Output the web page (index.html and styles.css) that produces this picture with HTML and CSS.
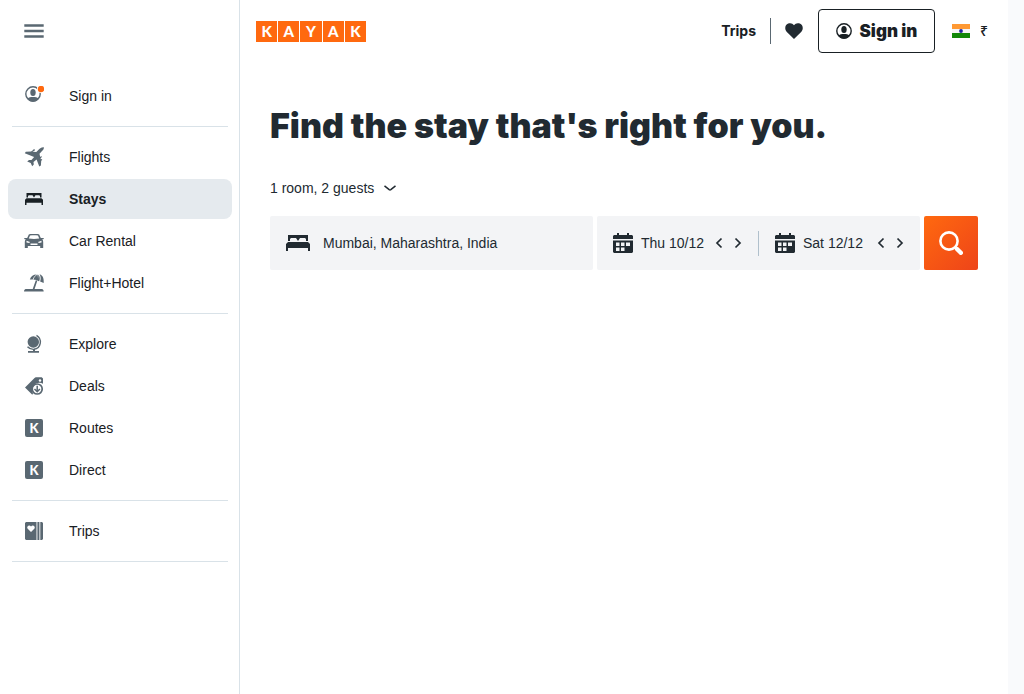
FILE: index.html
```html
<!DOCTYPE html>
<html lang="en">
<head>
<meta charset="utf-8">
<meta name="viewport" content="width=device-width, initial-scale=1">
<title>KAYAK Stays</title>
<link rel="stylesheet" href="styles.css">
</head>
<body>
<svg class="sprite" aria-hidden="true">
  <symbol id="bed" viewBox="0 0 24 16">
    <path d="M2 0h20v6h-2V4l-1-1h-5l-2 3-2-3H5L4 4v2H2z"/>
    <path d="M2 7h20l2 2v7h-2v-3H2v3H0V9z"/>
  </symbol>
  <symbol id="user" viewBox="0 0 16 16">
    <circle cx="8" cy="8" r="7.2" fill="none" stroke="currentColor" stroke-width="1.4"/>
    <ellipse cx="8" cy="6.5" rx="2.7" ry="3.5"/>
    <path d="M2.4 12.4c1.6-1.2 3.2-1.5 5.6-1.5s4 .3 5.6 1.5C12.400 14.500 10.500 15.600 8 15.600S3.600 14.500 2.400 12.400z"/>
  </symbol>
  <symbol id="calendar" viewBox="0 0 20 20">
    <path d="M1 2h3V0h2v2h8V0h2v2h3l1 1v3H0V3l1-1z"/>
    <path fill-rule="evenodd" d="M0 7.500h20V19l-1 1H1l-1-1zM3 9.500V13h3.500V9.500zM8 9.500V13h3.500V9.500zM13 9.500V13h4V9.500zM3 14.500V18h3.500v-3.500zM8 14.500V18h3.500v-3.500z"/>
  </symbol>
  <symbol id="left" viewBox="0 0 8 12"><path d="M6.500 1.500L2 6l4.500 4.500" fill="none" stroke="currentColor" stroke-width="1.700"/></symbol>
  <symbol id="right" viewBox="0 0 8 12"><path d="M1.500 1.500L6 6l-4.500 4.500" fill="none" stroke="currentColor" stroke-width="1.700"/></symbol>
</svg>
<div class="page">
  <aside class="sidebar">
    <button class="menu" aria-label="Menu"><svg class="icon" viewBox="0 0 20 20"><path d="M.3 3.300h19.400v2.400H.3zM.3 8.800h19.400v2.400H.3zM.3 14.300h19.400v2.400H.3z"/></svg></button>
    <nav class="nav" aria-label="Main">
      <a class="item" href="#"><svg class="icon" viewBox="0 0 20 20"><use href="#user" x="1" y="0" width="16" height="16"/><circle cx="17" cy="3" r="4" fill="#fff"/><circle cx="17" cy="3" r="3.200" fill="#ff690f"/></svg>Sign in</a>
      <hr class="rule">
      <a class="item" href="#"><svg class="icon" viewBox="0 0 20 20"><path d="M19.800.2c.3 1-.3 2.300-1.300 3.400l-3 3.100.7 3.200 1-.8.7.8-1.300 1.400.3 1.200.7-.6.7.7-1.100 1.400-.3 4.600-1.600 1-2.700-7.200-3.100 2.600.3 2.500-1.600 1.700-1.500-3.300-3.500-1.400 1.800-1.600 2.500.2 2.600-3.100L.8 6.300l1-1.600 5.300-.1 1.300-1.100.7.7-.5.6 3.700.3 2-2.100c1.300-1.300 2.800-3 5.500-2.800z"/><path d="M8.300 3.600l1.800-1.500.9.900-1.200 1.500z"/></svg>Flights</a>
      <a class="item active" href="#" aria-current="page"><svg class="icon" viewBox="0 0 20 20"><use href="#bed" x="1" y="4" width="18" height="12"/></svg>Stays</a>
      <a class="item" href="#"><svg class="icon" viewBox="0 0 20 20"><path fill-rule="evenodd" d="M0 7h3.200l1.600-3.600C5.200 3.100 7 3 10 3s4.800.1 5.200.4L16.800 7H20l-.7 1.300h-1.100c.7.800 1 1.600 1 2.700v6h-3v-2H3.800v2h-3v-6c0-1.100.3-1.900 1-2.700H.7zM6 4.500L4.800 7.600c3.400.5 7 .5 10.400 0L14 4.500c-2.600-.4-5.400-.4-8 0zM2.500 9.800v1.600l2.700.6.8-1zM17.500 9.800v1.600l-2.700.6-.8-1zM6.500 12.500v1.600h7v-1.600z"/></svg>Car Rental</a>
      <a class="item" href="#"><svg class="icon" viewBox="0 0 20 20"><path d="M0 18.400c0-1.800 1.300-2.400 2.500-2.400h6.200l3.100-8.700 1.500.5L10.600 16H17c1.500 0 2.700.6 2.700 2.400z"/><path d="M5.800 6.500C7 3.200 9.300 1.600 12.700 1.500 10.300 3 9.200 4.800 8.700 6.400zM9.400 6.700c.7-2.300 2-4 4.200-5.200l.8 6.700c-1.300-1.200-3.100-1.700-5-1.500zM14.300 1.400c1.700 2 1.900 4.500.9 6.900L14 7.900zM15.600 1.200c3.300 1.300 4.400 3.900 4.100 8.700l-3.600-1.500c.9-2.300.8-4.700-.5-7.200z"/></svg>Flight+Hotel</a>
      <hr class="rule">
      <a class="item" href="#"><svg class="icon" viewBox="0 0 20 20"><circle cx="9.300" cy="8" r="5.700"/><path d="M12.500 1.300c6.200 3.700 4.600 13-2.500 14-2.600.2-4.700-.7-6.500-2.600" fill="none" stroke="currentColor" stroke-width="1.400"/><path d="M9 15h2v2h4v1.700H4V17h5z"/></svg>Explore</a>
      <a class="item" href="#"><svg class="icon" viewBox="0 0 20 20"><path d="M1 11.500L10.500 2l1.200-.7h6L19 2.500v5.300C13.500 4.300 6.200 9.600 9 17.500l-.7 1.200z"/><circle cx="16" cy="4.500" r="1.200" fill="#fff"/><circle cx="13.200" cy="13" r="5" fill="none" stroke="currentColor" stroke-width="1.700"/><path d="M13.200 9.700v6M10.500 13l2.700 2.700 2.700-2.700" fill="none" stroke="currentColor" stroke-width="1.500"/></svg>Deals</a>
      <a class="item" href="#"><span class="badge" aria-hidden="true">K</span>Routes</a>
      <a class="item" href="#"><span class="badge" aria-hidden="true">K</span>Direct</a>
      <hr class="rule">
      <a class="item" href="#"><svg class="icon" viewBox="0 0 20 20"><path d="M2 1h10.500v18H2l-1-1V2zM13.400 1h2v18h-2zM16.300 1H18l1 1v16l-1 1h-1.700z"/><path d="M7 11L3.500 7.500C2.300 5.500 5.200 3.300 7 5.400c1.800-2.100 4.700.1 3.500 2.100z" fill="#fff"/></svg>Trips</a>
      <hr class="rule">
    </nav>
  </aside>
  <div class="content">
    <header class="header">
      <a class="logo" href="#" aria-label="KAYAK"><span>K</span><span>A</span><span>Y</span><span>A</span><span>K</span></a>
      <div class="tools">
        <a class="trips" href="#">Trips</a>
        <button class="heart" aria-label="Favourites"><svg viewBox="0 0 18 16"><path d="M9 16L1.600 8.700C-.7 6 0 1.800 3.200.6 5.600-.3 7.700.5 9 2.200 10.300.5 12.400-.3 14.800.6 18 1.800 18.700 6 16.400 8.700z"/></svg></button>
        <button class="signin"><svg viewBox="0 0 16 16"><use href="#user"/></svg>Sign in</button>
        <button class="locale" aria-label="India, rupee"><svg viewBox="0 0 18 14"><path fill="#f93" d="M0 0h18v5H0z"/><path fill="#f6f6f6" d="M0 5h18v4H0z"/><path fill="#138808" d="M0 9h18v5H0z"/><circle cx="9" cy="7" r="1.900" fill="#22229b"/></svg><span>₹</span></button>
      </div>
    </header>
    <main class="main">
      <h1 class="title">Find the stay that's right for you.</h1>
      <button class="guests">1 room, 2 guests<svg viewBox="0 0 12 6"><path d="M.5.800L5.200 4.600q.8.600 1.600 0L11.500.800" fill="none" stroke="currentColor" stroke-width="1.500"/></svg></button>
      <form class="search">
        <label class="field place"><svg viewBox="0 0 24 16"><use href="#bed"/></svg><input type="text" value="Mumbai, Maharashtra, India" aria-label="Destination"></label>
        <div class="field dates">
          <div class="date"><svg class="cal"><use href="#calendar"/></svg><button type="button" class="day">Thu 10/12</button><button type="button" class="step" aria-label="Earlier check-in"><svg><use href="#left"/></svg></button><button type="button" class="step" aria-label="Later check-in"><svg><use href="#right"/></svg></button></div>
          <div class="split"></div>
          <div class="date"><svg class="cal"><use href="#calendar"/></svg><button type="button" class="day">Sat 12/12</button><button type="button" class="step" aria-label="Earlier check-out"><svg><use href="#left"/></svg></button><button type="button" class="step" aria-label="Later check-out"><svg><use href="#right"/></svg></button></div>
        </div>
        <button class="go" aria-label="Search"><svg viewBox="0 0 24 24"><circle cx="10" cy="10" r="8.600" fill="none" stroke="currentColor" stroke-width="2.600"/><path d="M16 16l1.500 1.500" stroke="currentColor" stroke-width="3"/><path d="M18 18l3.800 3.800" stroke="currentColor" stroke-width="4.400" stroke-linecap="round"/></svg></button>
      </form>
    </main>
  </div>
</div>
</body>
</html>
```
FILE: styles.css
```css
* { box-sizing: border-box; }
body {
  margin: 0;
  background: #fff;
  color: #192024;
  font: 14px/20px "Liberation Sans", Arial, sans-serif;
}
svg { display: block; flex: none; fill: currentColor; }
button {
  margin: 0;
  padding: 0;
  border: 0;
  background: none;
  color: inherit;
  font: inherit;
  cursor: pointer;
}
a { color: inherit; text-decoration: none; }
.sprite { display: none; }

.page { display: flex; min-height: 100vh; border-right: 16px solid #f9fafc; }

.sidebar { flex: none; width: 240px; border-right: 1px solid #d9e2e8; }
.menu {
  display: flex;
  align-items: center;
  height: 62px;
  padding-left: 24px;
}
.icon { width: 20px; height: 20px; color: #5a6872; }
.nav { padding: 14px 7px 0 8px; }
.item {
  display: flex;
  align-items: center;
  gap: 25px;
  height: 40px;
  padding: 0 16px;
  border-radius: 8px;
}
.item + .item { margin-top: 2px; }
.active { background: #e5eaee; font-weight: 700; }
.active .icon { color: #192024; }
.rule { height: 1px; margin: 10px 4px; border: 0; background: #d9e2e8; }
.badge {
  width: 18px;
  height: 18px;
  margin: 0 1px;
  border-radius: 2px;
  background: #5a6872;
  color: #fff;
  font: 900 13px/18px Lato, sans-serif;
  text-align: center;
}

.content { flex: 1; min-width: 0; }
.header {
  display: flex;
  align-items: center;
  justify-content: space-between;
  height: 62px;
  padding: 0 20px 0 16px;
}
.logo { display: flex; gap: 1px; width: 110px; height: 21px; }
.logo span {
  flex: 1;
  background: #ff690f;
  color: #fff;
  font: 900 15px/21px Lato, sans-serif;
  text-align: center;
}
.tools { display: flex; align-items: center; }
.trips {
  padding-right: 14px;
  border-right: 1px solid #5a6872;
  font: 700 14px/26px Inter, sans-serif;
}
.heart { margin: 0 15px 0 14px; color: #212a31; }
.heart svg { width: 18px; height: 16px; }
.signin {
  display: flex;
  align-items: center;
  justify-content: center;
  gap: 8px;
  width: 117px;
  height: 44px;
  border: 1px solid #192024;
  border-radius: 4px;
  font: 900 17px/20px Inter, sans-serif;
}
.signin svg { width: 16px; height: 16px; }
.locale { display: flex; align-items: center; gap: 10px; margin-left: 17px; font: 500 14px/20px "Noto Sans", sans-serif; }
.locale svg { width: 18px; height: 14px; }

.main { padding: 42px 30px 0; color: #212a31; }
.title { margin: 0; font: 900 34px/44px Inter, sans-serif; }
.guests { display: flex; align-items: center; gap: 10px; height: 20px; margin: 30px 0 18px; }
.guests svg { width: 12px; height: 6px; }
.search {
  display: grid;
  grid-template-columns: minmax(0, 1fr) minmax(0, 1fr) 54px;
  gap: 4px;
  height: 54px;
}
.field { display: flex; align-items: center; border-radius: 2px; background: #f3f4f6; }
.place { gap: 13px; padding: 0 16px; }
.place svg { width: 24px; height: 16px; }
.place input {
  flex: 1;
  min-width: 0;
  padding: 0;
  border: 0;
  outline: 0;
  background: none;
  color: inherit;
  font: inherit;
}
.date { display: flex; align-items: center; flex: 1; padding: 0 11px 0 16px; }
.cal { width: 20px; height: 20px; }
.day { flex: 1; padding-left: 8px; text-align: left; white-space: nowrap; }
.step { display: flex; justify-content: center; width: 19px; }
.step svg { width: 8px; height: 12px; }
.split { flex: none; width: 1px; height: 25px; background: #b0c0cc; }
.go {
  display: grid;
  place-items: center;
  border-radius: 2px;
  background: linear-gradient(135deg, #ff690f, #ee4419);
  color: #fff;
}
.go svg { width: 24px; height: 24px; }
```
